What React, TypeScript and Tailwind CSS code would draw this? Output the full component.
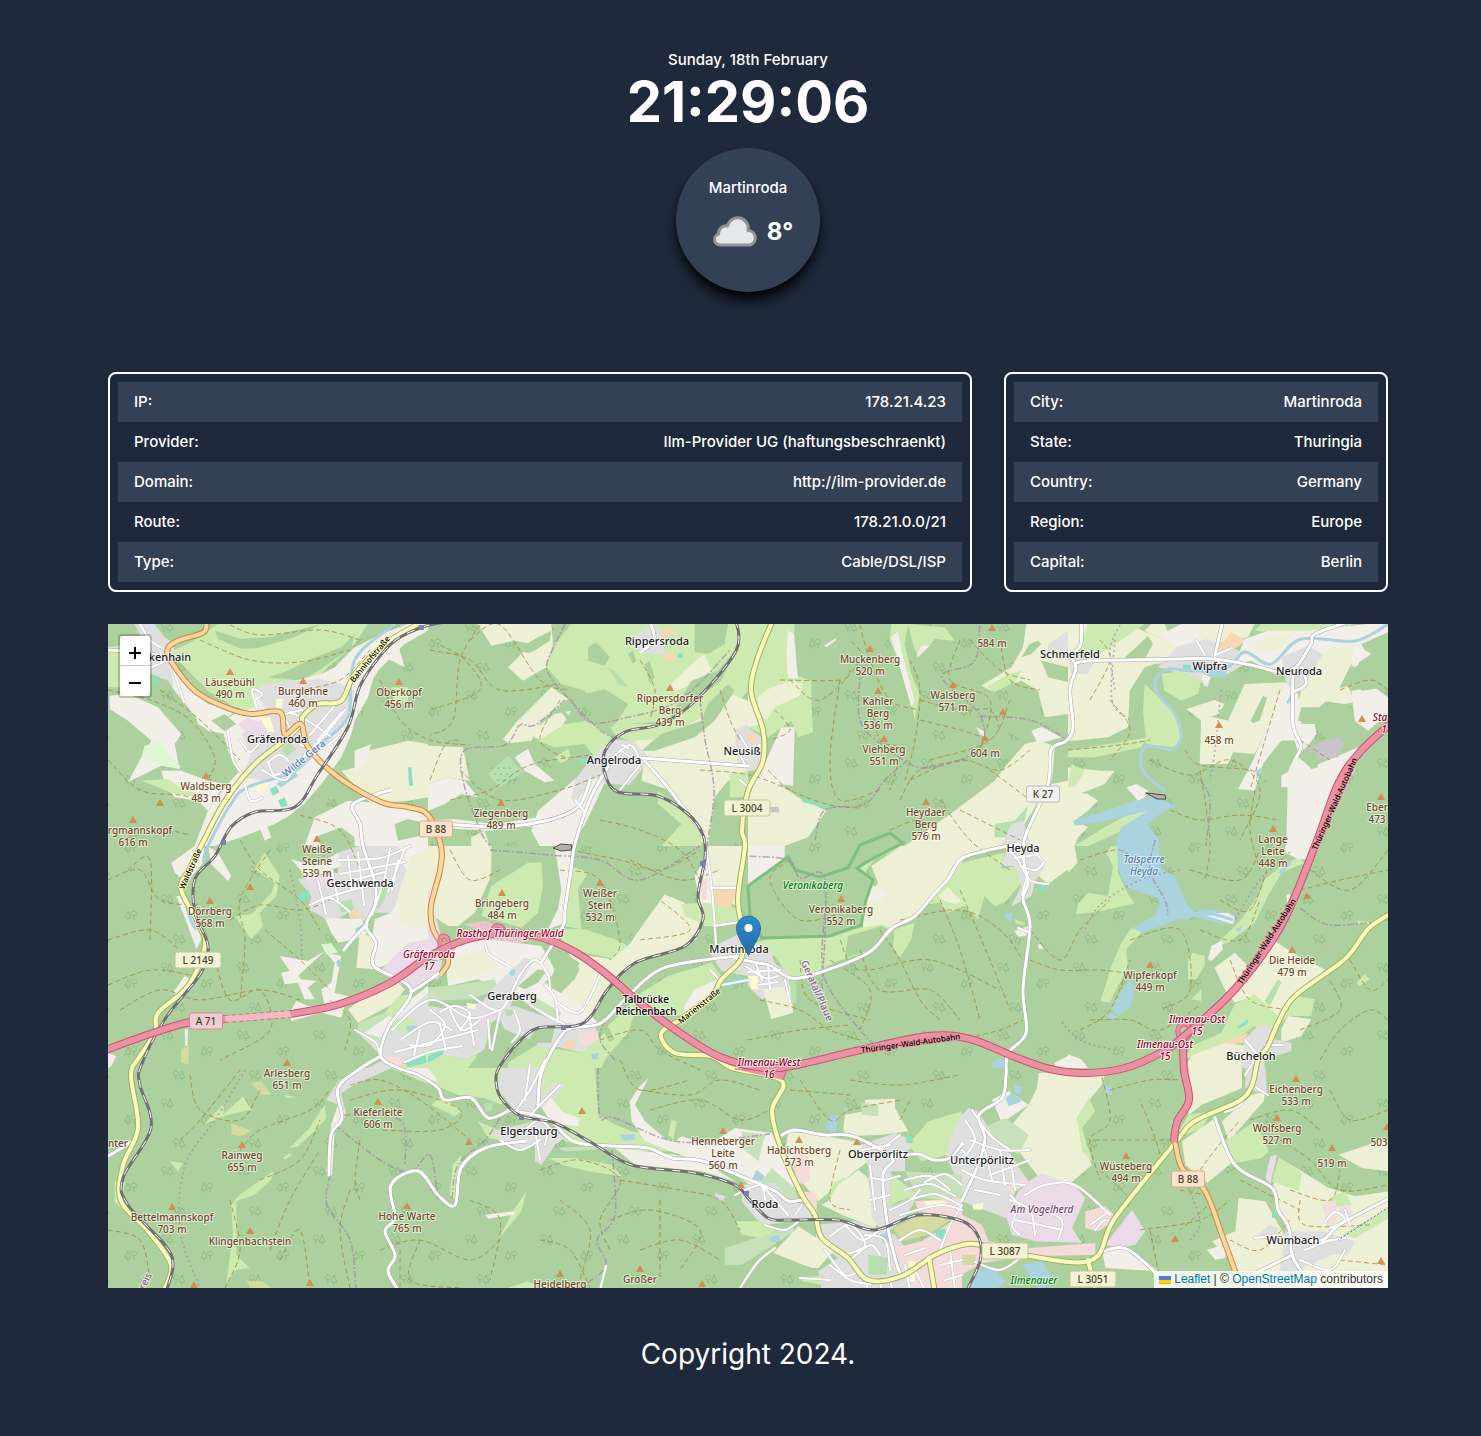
import React from "react";

const C = {
  D: "#add19e",
  F: "#eef0d5",
  G: "#cdebb0",
  L: "#f2efe9",
  R: "#e0dfdf",
  I: "#ebdbe8",
  W: "#aad3df",
  P: "#f5dcda",
  O: "#f8d8b4",
  T: "#8be0c2",
  M: "#def6d0",
  Q: "#c6c4c6",
  K: "#b7dfb0",
  V: "#c7e2bb",
  Y: "#fdfbd0",
  S: "#ebc4c9",
  U: "#d5daa0",
};

type Area = [keyof typeof C, string];
type Sheet = { x: number; y: number; areas: Area[] };

/* Land cover, three units per map pixel inside each sheet. */
const sheets: Sheet[] = [
  {
    x: 108,
    y: 624,
    areas: [
      ["G", "0,70 60,60 60,190 0,190"],
      ["G", "190,80 240,60 330,0 780,0 740,60 660,130 600,190 560,170 470,180 440,240 380,250 300,200 220,120"],
      ["R", "80,0 140,0 170,40 200,60 190,130 240,240 205,210 180,170 130,150 60,150 60,60 100,40"],
      ["D", "320,20 400,45 480,40 640,0 600,20 560,40 450,72 400,75 330,45"],
      ["D", "480,160 540,140 620,100 700,70 740,30 730,70 640,135 580,170"],
      ["L", "740,70 820,30 900,0 960,0 960,20 890,60 850,100 800,150 780,220 740,290 730,330 700,400 640,480 570,560 500,600 400,640 320,666 260,666 300,560 350,490 395,440 360,380 340,300 400,250 440,210 470,180 560,170 640,150 680,130"],
      ["L", "790,120 870,60 890,130 830,100 800,160"],
      ["R", "440,200 470,180 560,170 640,165 700,180 740,200 720,280 650,370 560,440 470,470 400,460 430,390 400,330 480,270"],
      ["G", "378,245 378,190 430,200 440,250 410,260"],
      ["I", "390,300 420,280 470,305 500,310 470,345 420,335"],
      ["L", "190,130 250,190 300,240 380,260 340,300 350,330 300,320 255,270 195,190"],
      ["L", "5,215 60,210 150,250 185,290 220,330 200,360 215,435 160,425 60,475 100,400 130,350 60,290 5,255"],
      ["L", "255,250 300,280 330,310 310,325 270,300"],
      ["D", "310,290 350,270 385,300 350,322"],
      ["M", "110,365 150,355 220,430 170,425 100,400"],
      ["L", "160,440 220,440 300,470 350,480 300,560 270,530 200,520 170,480"],
      ["G", "100,470 180,465 230,500 300,510 280,520 200,510"],
      ["F", "745,430 780,380 900,350 960,360 960,520 900,530 790,540 700,440"],
      ["T", "900,430 910,430 915,485 903,485"],
      ["L", "620,580 720,530 850,540 960,560 960,666 590,666"],
      ["D", "860,600 900,585 960,600 960,630 870,650"],
      ["D", "620,640 700,610 740,640 740,666 640,666"],
      ["L", "740,380 790,360 770,420 740,450"],
      ["D", "480,640 560,560 650,500 660,530 560,640 500,666"],
      ["W", "505,480 560,440 570,455 520,490"],
      ["Y", "445,480 480,475 470,500 450,505"],
      ["Y", "505,225 525,225 520,260 503,258"],
      ["Y", "455,280 485,280 500,325 480,325"],
      ["K", "515,380 545,355 565,375 540,395"],
      ["T", "485,495 505,485 515,505 495,515"],
      ["T", "510,530 530,520 540,545 520,550"],
      ["T", "130,160 150,155 150,175 135,180"],
      ["L", "440,570 460,560 490,640 470,650"],
      ["G", "850,190 900,190 900,230 860,250"],
    ],
  },
  {
    x: 428,
    y: 624,
    areas: [
      ["F", "150,0 370,0 375,60 355,130 285,170 240,130 310,60 260,50 190,65"],
      ["D", "270,75 330,40 370,20 365,50 320,80 300,88"],
      ["G", "430,0 960,0 960,200 870,300 700,370 620,360 560,330 470,200 400,180 355,130 380,60"],
      ["D", "480,70 505,55 545,100 530,125 480,110"],
      ["D", "470,210 530,195 600,240 570,290 540,320 470,250"],
      ["D", "800,0 900,0 890,60 840,90 800,85"],
      ["F", "730,180 790,120 830,90 850,140 790,180 740,205"],
      ["D", "790,170 870,140 920,80 930,60 880,170 800,230 700,300 600,300 720,290"],
      ["F", "620,350 700,345 840,270 880,200 960,230 960,460 900,470 860,520 840,666 800,640 780,600 730,500 640,470 650,400"],
      ["D", "640,380 700,330 820,290 840,240 900,180 920,200 860,290 800,340 680,380"],
      ["F", "225,345 265,295 370,190 420,225 390,250 340,290 310,350 240,358"],
      ["F", "300,330 380,270 430,260 400,310 340,350"],
      ["G", "330,350 410,300 480,290 550,340 520,400 460,390 380,370"],
      ["D", "380,370 470,360 500,400 440,430 370,430 340,380 250,360 110,375 150,500"],
      ["G", "380,400 420,375 430,400 400,418"],
      ["L", "260,400 300,375 320,420 380,470 350,475 290,440"],
      ["F", "0,365 105,370 125,470 60,460 0,480"],
      ["L", "0,480 60,460 110,470 150,520 100,510 50,540 0,560"],
      ["K", "180,450 240,395 285,445 215,490"],
      ["L", "310,620 330,560 400,500 470,440 545,440 510,520 440,666 335,666"],
      ["L", "0,590 80,585 200,600 330,580 330,605 180,620 0,610"],
      ["F", "130,640 170,620 185,666 130,666"],
      ["R", "500,390 560,345 620,355 660,400 640,440 580,510 500,460 440,540 430,520 440,470"],
      ["R", "600,40 680,0 700,30 710,90 640,90"],
      ["O", "705,90 740,90 740,110 710,115"],
      ["O", "695,20 730,10 740,30 705,40"],
      ["T", "750,90 765,88 765,102 750,102"],
      ["T", "455,405 472,400 475,418 455,418"],
      ["D", "550,480 700,490 770,560 780,600 740,666 430,666 510,540"],
      ["G", "690,500 780,570 820,620 820,666 700,666 760,600 690,540"],
      ["G", "905,450 960,440 960,520 905,520"],
      ["R", "920,320 960,300 960,440 930,430"],
      ["D", "395,250 430,280 420,290 400,265"],
      ["D", "600,90 615,80 625,110 615,120"],
      ["D", "650,120 665,110 680,160 665,180"],
      ["K", "540,130 570,150 600,190 570,180"],
    ],
  },
  {
    x: 748,
    y: 624,
    areas: [
      ["G", "0,0 140,0 130,150 190,170 190,230 195,325 150,340 130,290 60,340 0,310"],
      ["D", "60,0 75,0 50,60 40,60"],
      ["L", "120,20 138,30 150,165 120,160 115,90"],
      ["F", "30,220 60,195 130,170 165,180 155,215 80,250 55,290 30,260"],
      ["L", "45,430 100,310 140,310 135,485 90,480 70,600 60,666 0,666 0,500"],
      ["F", "0,210 25,220 40,300 0,310"],
      ["F", "0,470 95,480 150,520 235,560 180,640 110,666 0,666 0,580"],
      ["G", "430,0 480,0 470,60 490,150 515,210 500,290 480,170 450,100 425,50"],
      ["G", "480,0 590,10 620,50 560,45 540,70 510,100 495,60"],
      ["L", "505,100 520,65 545,65 520,90"],
      ["L", "430,40 450,20 460,80 500,230 490,250 450,110"],
      ["L", "228,65 265,42 262,50 235,70"],
      ["F", "835,0 960,0 960,270 890,280 870,200 820,170 730,200 700,185 790,130 825,70"],
      ["G", "715,190 780,150 820,140 800,175 740,203"],
      ["D", "845,60 870,50 880,60 850,90 820,100"],
      ["D", "880,110 960,130 960,175 900,160"],
      ["D", "790,170 870,210 880,280 860,320 830,360 760,300"],
      ["L", "850,320 880,308 940,340 870,360"],
      ["F", "620,560 740,470 770,430 830,360 870,350 930,370 910,470 830,600 810,666 470,666"],
      ["F", "910,480 960,470 960,666 820,666"],
      ["D", "920,370 960,350 960,430 915,440"],
      ["K", "740,600 800,590 840,545 830,590 790,640 740,640"],
      ["R", "790,600 825,590 850,666 760,666"],
      ["L", "685,310 715,325 715,340 695,330"],
      ["T", "155,520 240,545 300,545 240,552 165,535"],
      ["R", "0,310 40,340 50,400 20,440 0,440"],
      ["O", "0,330 30,330 25,355 0,350"],
      ["R", "900,60 960,20 960,110 900,90"],
      ["Q", "65,550 90,548 95,565 70,565"],
    ],
  },
  {
    x: 1068,
    y: 624,
    areas: [
      ["F", "0,0 150,0 200,10 340,70 360,110 260,120 200,180 180,310 120,340 20,350 0,350"],
      ["G", "60,0 230,0 130,70 50,110 20,110"],
      ["D", "215,60 240,35 255,60 230,105 165,105"],
      ["F", "250,0 560,0 540,40 440,60 330,70 230,20"],
      ["D", "290,0 350,0 330,20 300,25"],
      ["L", "280,30 340,0 400,0 390,50 330,75"],
      ["R", "330,65 420,45 540,90 530,120 480,150 430,150 420,190 380,160 270,130"],
      ["R", "0,100 80,110 60,150 10,150"],
      ["O", "450,70 490,25 535,50 490,80 460,85"],
      ["G", "740,0 860,0 740,40 560,20 580,0"],
      ["L", "530,45 600,20 720,20 900,0 960,0 960,25 880,60 900,100 860,130 800,70 720,150 620,150 550,110 500,120"],
      ["F", "560,60 600,35 680,30 620,80 570,80"],
      ["R", "640,100 720,65 780,100 710,200 660,210 650,150"],
      ["F", "775,75 880,60 810,200 720,280 680,270 700,200 740,130"],
      ["F", "790,200 840,185 860,235 830,240 760,230"],
      ["G", "230,180 270,215 320,270 340,340 320,370 235,360 225,260"],
      ["G", "280,150 340,140 400,170 390,210 340,230 290,200"],
      ["D", "185,200 230,130 260,120 220,200 220,300 180,310"],
      ["L", "400,150 430,160 410,190"],
      ["F", "355,255 440,228 470,240 450,270 400,290"],
      ["F", "400,270 480,290 530,180 650,175 620,270 560,390 495,385 480,420 395,420"],
      ["D", "548,290 585,215 597,222 575,290 555,298"],
      ["L", "650,175 690,210 700,300 740,300 745,330 720,365 690,390 690,400 730,430 870,370 860,440 780,560 740,666 655,666 660,440 685,390 680,350 640,350 600,400 585,420 560,500 510,495 550,420 620,260"],
      ["D", "640,350 680,350 690,385 670,400 650,500 600,520 590,430"],
      ["L", "640,455 665,440 665,490 640,490"],
      ["Q", "715,370 810,335 830,360 810,400 740,410"],
      ["D", "690,390 740,380 750,430 730,435"],
      ["D", "700,250 840,250 900,290 960,260 860,320 780,350 740,300 690,290"],
      ["L", "850,200 920,190 960,220 960,270 900,320 860,290"],
      ["D", "870,100 960,70 960,190 880,200"],
      ["F", "0,430 100,440 140,440 110,480 60,500 0,520"],
      ["F", "0,500 60,510 90,530 60,560 20,590 60,610 30,640 20,666 0,666"],
      ["G", "0,380 180,350 240,340 220,370 80,400 0,400"],
      ["G", "10,420 50,440 20,490 0,490"],
      ["G", "110,610 200,560 250,550 200,600 120,640 60,666 20,666"],
      ["W", "15,590 100,565 200,530 235,520 290,530 330,548 300,556 275,570 240,600 280,666 140,666 160,610 240,560 120,590 20,605"],
      ["L", "175,490 205,480 240,500 230,520 210,530"],
      ["Q", "230,503 290,508 296,522 270,524 235,515"],
      ["T", "345,122 368,122 368,138 345,138"],
      ["W", "400,145 480,135 470,160 430,160"],
      ["W", "565,440 580,430 575,460 565,465"],
      ["W", "655,235 670,210 672,225 660,240"],
      ["L", "860,60 910,90 850,130"],
    ],
  },
  {
    x: 108,
    y: 846,
    areas: [
      ["L", "190,50 260,0 290,0 285,50 235,110 200,80"],
      ["L", "300,0 330,20 370,90 360,105 310,55"],
      ["L", "205,150 235,150 280,280 265,310 240,240"],
      ["L", "230,390 250,400 210,450 195,440"],
      ["G", "440,70 470,20 515,90 505,150 455,200 465,240 430,280 380,210 430,205 490,140 500,110"],
      ["R", "570,100 690,80 690,20 750,0 930,0 900,90 850,200 800,200 760,230 720,200 670,230 640,210 600,190 610,150"],
      ["I", "590,95 690,80 690,130 620,130"],
      ["L", "550,40 620,60 690,20 700,60 600,100"],
      ["L", "650,215 760,220 780,260 740,280 690,290 670,260"],
      ["K", "690,170 730,160 740,190 700,200"],
      ["O", "720,200 750,190 760,210 730,222"],
      ["K", "820,120 840,110 830,160 805,200"],
      ["L", "870,0 960,0 960,280 890,310 850,350 800,370 790,300 800,220 850,200 900,90"],
      ["F", "910,30 960,10 960,250 880,240 870,150"],
      ["F", "755,260 790,270 800,370 745,365"],
      ["I", "815,375 900,290 960,280 960,400 920,435 850,400"],
      ["F", "790,440 860,400 890,430 860,470 750,530 720,490"],
      ["L", "515,330 600,345 650,315 570,390 580,400 625,405 600,425 620,460 590,460 570,410 530,415 520,380 545,375"],
      ["M", "640,295 670,292 690,320 655,325"],
      ["L", "655,320 700,330 680,440 720,450 700,490 650,480 640,430 670,410 680,350"],
      ["L", "545,500 565,465 600,480 710,480 700,515 640,500 550,525"],
      ["V", "750,530 860,490 840,560 800,590 750,560"],
      ["L", "770,560 870,490 960,420 960,500 880,580 830,580"],
      ["R", "745,555 800,590 870,520 960,440 960,620 860,666 780,666 830,640"],
      ["G", "860,666 960,620 960,666"],
      ["G", "845,550 870,500 910,470 910,445 870,450 830,500 860,520 930,520 900,560"],
      ["W", "895,540 930,538 930,555 900,558"],
      ["T", "565,150 600,130 607,152 580,170"],
      ["T", "890,645 952,628 956,650 898,664"],
      ["P", "830,630 890,640 880,655 840,666"],
      ["D", "700,310 740,300 740,330 700,335"],
      ["W", "740,250 770,232 765,245 745,258"],
      ["L", "0,620 25,630 10,660 0,666"],
      ["U", "220,610 242,600 242,655 220,650"],
      ["L", "230,550 240,550 238,600 232,600"],
      ["W", "685,345 697,340 697,365 687,360"],
    ],
  },
  {
    x: 428,
    y: 846,
    areas: [
      ["F", "0,0 200,0 185,100 140,200 90,240 60,240 0,200"],
      ["F", "200,0 215,0 190,90"],
      ["G", "160,210 190,120 300,50 350,50 350,120 330,200 280,245 230,230"],
      ["D", "340,40 395,50 400,130 370,220 340,250 330,200 345,120"],
      ["D", "190,0 380,0 360,30 290,45 190,100"],
      ["L", "380,0 430,0 412,230 360,250 390,190 400,130"],
      ["G", "430,60 480,80 450,130 460,250 410,240"],
      ["G", "400,250 470,250 560,280 600,300 560,340 430,310 390,270"],
      ["F", "600,300 710,145 770,170 780,210 820,220 805,280 770,300 620,345 560,400 540,430 480,520 440,520 380,460 440,400 455,370 420,320 550,340"],
      ["D", "700,110 800,115 800,165 720,150"],
      ["F", "835,0 950,0 940,110 925,180 840,130"],
      ["L", "800,90 835,30 850,130 860,240 830,240"],
      ["O", "850,130 925,130 910,185 870,200 855,160"],
      ["G", "760,175 830,170 925,185 930,230 840,240 770,210"],
      ["P", "820,100 837,100 837,160 820,160"],
      ["S", "110,235 170,225 260,260 300,285 240,300 190,290 180,265"],
      ["I", "0,130 50,310 30,400 0,400"],
      ["L", "50,300 180,280 340,300 380,370 360,420 450,470 520,540 380,530 250,440 150,400 60,420"],
      ["F", "60,340 160,310 210,360 130,395 60,400"],
      ["D", "370,300 455,350 440,390 400,400 395,425 350,410 380,380"],
      ["D", "270,420 330,370 355,375 330,410 290,430"],
      ["V", "0,425 100,415 200,400 210,430 130,460 0,465"],
      ["R", "0,480 60,490 160,470 220,400 290,335 320,345 270,420 240,500 190,530 170,610 120,640 0,620"],
      ["G", "0,620 120,640 150,625 120,666 0,666"],
      ["R", "200,490 260,480 400,530 500,540 520,590 460,620 380,600 350,666 300,666 330,590 230,550"],
      ["P", "450,560 510,555 510,600 460,600"],
      ["O", "410,585 445,585 440,605 410,605"],
      ["D", "290,600 330,540 380,545 370,590 320,590"],
      ["V", "300,440 400,500 390,520 310,485"],
      ["G", "540,540 640,440 720,390 850,350 880,390 830,430 760,510 700,500 620,500 600,560 530,640 510,600 560,580"],
      ["L", "800,430 870,400 850,450 760,530 770,480"],
      ["G", "240,650 320,600 460,620 530,560 550,600 520,666 240,666"],
      ["R", "840,310 960,250 960,390 880,375"],
      ["T", "890,405 940,390 945,410 895,425"],
      ["W", "245,375 262,370 260,385 247,390"],
      ["W", "490,625 512,620 508,640 492,640"],
      ["Y", "115,470 145,475 140,490 120,485"],
      ["T", "0,630 45,610 45,625 0,650"],
      ["K", "230,490 260,490 250,510 235,510"],
      ["I", "150,500 200,500 200,520 160,530"],
    ],
  },
  {
    x: 748,
    y: 846,
    areas: [
      ["L", "0,0 110,0 110,30 70,80 0,125"],
      ["G", "320,40 380,20 400,0 470,0 380,40 350,80 320,70"],
      ["F", "370,60 460,0 770,0 650,35 600,110 540,170 490,210 420,250 345,245 350,170 390,110"],
      ["L", "370,115 415,140 395,170 360,160"],
      ["G", "20,290 60,280 240,265 400,235 440,250 380,310 270,345 200,380 125,395 80,330 20,320"],
      ["D", "300,270 400,240 430,255 360,315 290,335"],
      ["G", "435,300 440,250 500,230 490,280 455,335"],
      ["G", "540,175 640,50 770,20 760,70 800,60 830,100 770,170 740,180 710,150 690,220 650,180 600,200 575,170"],
      ["F", "570,150 600,125 640,165 620,175 590,165"],
      ["F", "850,0 960,0 960,70 900,115 850,70"],
      ["R", "760,60 780,0 850,0 890,60 860,110 850,150 790,180 820,120 800,60"],
      ["L", "800,255 840,240 835,270 810,272"],
      ["R", "0,290 60,300 80,350 120,380 130,440 100,430 40,460 0,420"],
      ["F", "45,430 130,420 135,500 70,520"],
      ["Y", "0,390 30,390 30,430 10,430"],
      ["G", "800,220 830,230 830,238 805,232"],
      ["T", "870,125 890,115 895,130 875,138"],
      ["W", "770,205 795,200 790,225 778,222"],
      ["W", "733,650 760,635 775,666 730,666"],
      ["W", "210,440 235,430 230,445"],
      ["L", "870,295 880,295 885,310 873,308"],
      ["L", "920,650 960,630 960,666 920,666"],
      ["K", "125,395 145,395 145,470 130,470"],
    ],
  },
  {
    x: 1068,
    y: 846,
    areas: [
      ["G", "30,175 60,140 120,150 135,60 115,20 130,0 150,0 150,80 180,145 200,172 100,195 25,205"],
      ["F", "0,0 20,0 28,50 0,80"],
      ["W", "145,0 270,0 280,70 320,90 355,175 385,205 330,220 280,240 215,262 195,245 265,205 275,160 240,145 180,125 155,85"],
      ["W", "375,200 410,188 500,205 500,235 470,235 380,212"],
      ["L", "400,205 480,200 500,215 495,235 450,220"],
      ["G", "160,290 190,245 220,260 175,310 180,370 150,420 125,470 98,465 130,360"],
      ["W", "130,485 185,400 200,420 190,480 150,510"],
      ["W", "115,510 130,500 155,520 118,520"],
      ["G", "590,100 640,60 690,35 710,50 640,80 600,150 560,230 480,290 440,300 520,220 570,150"],
      ["L", "420,340 430,300 460,285 465,310 430,345"],
      ["W", "505,250 520,240 518,255 508,258"],
      ["F", "440,365 500,320 550,370 620,285 690,330 770,370 740,410 690,450 640,520 590,490 560,450 500,470 470,430"],
      ["G", "500,475 560,445 600,480 640,520 680,450 740,460 730,510 660,510 600,570 560,540 480,600 350,640 370,600 460,560"],
      ["K", "590,465 630,400 640,410 605,480"],
      ["F", "660,510 730,520 700,570 640,590 640,550"],
      ["F", "350,666 370,630 470,590 540,600 550,666"],
      ["R", "530,580 570,540 600,535 620,580 670,590 670,615 590,640 590,666 520,666"],
      ["G", "360,340 375,320 410,330 410,360 385,400 360,400"],
      ["G", "370,460 400,430 400,465"],
      ["L", "0,625 40,640 60,666 0,666"],
      ["O", "460,590 540,560 530,590 490,595"],
      ["L", "650,0 740,0 730,40 690,40 655,20"],
      ["W", "630,80 670,40 668,55 640,85"],
      ["G", "865,410 890,385 905,400 875,420"],
      ["T", "505,545 540,520 540,530 515,548"],
      ["L", "655,145 665,145 668,165 658,170"],
      ["G", "870,225 920,228 920,235 870,235"],
    ],
  },
  {
    x: 108,
    y: 1068,
    areas: [
      ["R", "690,40 760,0 850,0 740,50 700,75 715,140 680,190 670,320 655,310 668,180 690,110 655,95"],
      ["L", "690,110 710,130 680,190 672,320 656,310 670,170"],
      ["G", "545,240 600,185 650,110 655,150 620,190 570,235"],
      ["G", "525,270 545,255 550,262 530,275"],
      ["G", "395,380 495,310 490,335 440,380 385,400 385,560 425,600 385,605 355,645 375,500 370,410"],
      ["G", "288,168 350,105 345,140 405,85 430,125 360,140"],
      ["G", "185,280 225,285 210,310"],
      ["G", "20,340 50,340 40,420 20,400"],
      ["G", "850,0 1200,0 1180,110 1130,90 1050,80 1000,60 940,40"],
      ["L", "890,0 960,0 990,40 930,30"],
      ["R", "1180,0 1281,0 1281,150 1220,130 1170,60"],
      ["G", "970,110 1000,85 1060,130 1040,145"],
      ["G", "1110,160 1180,190 1200,220 1140,210"],
      ["R", "1150,190 1281,160 1281,230 1240,250 1180,220"],
      ["K", "1130,105 1155,105 1150,130 1130,130"],
      ["G", "1025,380 1035,290 1060,260 1060,290 1042,340 1045,400"],
      ["G", "1255,370 1240,430 1170,515 1215,430"],
      ["L", "1130,440 1220,430 1220,440 1140,452"],
      ["U", "430,45 460,40 490,80 460,80"],
      ["U", "370,165 430,190 400,205 370,200"],
      ["G", "530,80 570,88 535,90"],
      ["U", "415,640 460,640 500,666 430,666"],
      ["G", "1200,660 1260,640 1281,650 1281,666"],
    ],
  },
  {
    x: 535,
    y: 1068,
    areas: [
      ["G", "0,0 180,0 190,140 240,170 290,190 430,220 430,250 240,250 90,220 60,130 0,90"],
      ["R", "0,0 30,0 20,80 60,40 90,50 60,90 20,120 0,110"],
      ["L", "20,120 50,90 80,130 130,150 130,175 50,165"],
      ["R", "0,140 90,210 60,230 20,290 0,280"],
      ["V", "70,240 230,230 240,245 90,250"],
      ["D", "80,255 220,240 340,255 460,270 500,300 400,300 290,290 230,260"],
      ["G", "40,270 120,270 230,290 260,325 160,310 80,290"],
      ["L", "285,100 310,60 340,30 300,110 330,160 400,220 420,220 440,205 520,230 600,180 710,195 740,260 780,360 720,400 600,320 460,270 330,220 290,160"],
      ["L", "240,240 420,260 520,290 600,340 500,310 300,290"],
      ["V", "620,190 690,200 670,280 620,240"],
      ["V", "710,300 780,360 790,400 720,390 680,340"],
      ["R", "620,350 720,345 760,400 820,410 830,450 700,470 720,480 670,460 620,400"],
      ["F", "760,190 870,205 960,220 1010,240 1000,280 960,310 910,350 850,400 790,330 750,250"],
      ["P", "770,240 820,260 825,340 785,350"],
      ["P", "800,370 845,375 845,490 830,440"],
      ["F", "925,180 930,140 990,130 990,95 1080,92 1080,120 1120,190 1040,200 930,205"],
      ["V", "980,105 1030,110 1030,145 980,140"],
      ["G", "890,350 930,325 910,400 880,400"],
      ["F", "910,350 970,305 1000,330 1010,420 1040,440 1020,480 920,440 860,410 880,400"],
      ["R", "980,230 1080,195 1160,230 1110,250 1110,310 1070,310 1060,420 1150,380 1110,450 1050,500 1010,450 1000,300"],
      ["G", "1070,320 1150,380 1090,400 1060,420"],
      ["G", "1120,230 1180,160 1281,130 1281,220 1240,260 1160,280"],
      ["R", "1281,140 1262,170 1245,220 1235,270 1260,320 1281,330"],
      ["V", "1110,310 1281,320 1281,400 1150,390"],
      ["U", "1075,480 1180,430 1240,460 1180,500 1100,520"],
      ["P", "1140,400 1281,390 1281,450 1150,430"],
      ["R", "850,470 960,460 1080,500 1130,560 1140,666 860,666 850,610 910,570 840,520"],
      ["K", "1000,560 1060,570 1055,620 1000,620"],
      ["P", "1080,540 1160,520 1281,440 1281,666 1130,666"],
      ["V", "600,530 690,500 770,475 780,490 700,540 620,590 570,590 570,540"],
      ["G", "600,460 690,460 720,490 680,510 620,500"],
      ["F", "715,555 790,475 900,545 850,600 830,600"],
      ["G", "800,630 870,620 860,650 800,640"],
      ["R", "540,375 570,385 565,400 540,390"],
      ["W", "650,335 665,305 690,325 680,340"],
      ["W", "870,180 890,140 912,140 900,195"],
      ["W", "255,200 300,198 300,215 265,218"],
      ["W", "700,510 730,500 735,520 710,525"],
      ["W", "1035,500 1060,490 1070,525 1045,525"],
      ["W", "920,115 940,120 930,130"],
      ["T", "1110,205 1130,205 1135,225 1115,225"],
      ["T", "1200,490 1230,480 1235,510 1205,515"],
      ["Y", "1170,400 1230,400 1230,418 1175,418"],
      ["Y", "1120,580 1140,580 1140,640 1125,640"],
      ["G", "400,200 410,155 425,160 415,215"],
    ],
  },
  {
    x: 962,
    y: 1068,
    areas: [
      ["F", "230,15 430,15 420,50 370,110 345,150 360,230 390,290 320,350 240,340 170,250 150,170 200,110 225,60"],
      ["G", "345,150 380,90 400,130 360,180 390,280 360,250"],
      ["L", "90,95 140,70 200,110 120,165"],
      ["V", "60,180 130,150 200,200 170,260 90,220"],
      ["R", "0,140 20,120 50,130 90,200 130,240 200,340 160,370 130,450 0,400"],
      ["P", "130,360 190,335 200,345 150,375"],
      ["I", "130,440 170,370 200,340 240,315 340,355 370,390 330,480 360,525 220,520 150,500"],
      ["P", "370,430 430,415 465,450 410,490 370,480"],
      ["I", "430,530 510,425 550,490 520,530 470,540"],
      ["F", "680,0 840,0 840,60 720,110 680,140 675,100"],
      ["G", "650,190 680,140 750,130 720,180 670,200"],
      ["F", "660,220 760,150 815,280 735,345 670,290"],
      ["F", "780,160 870,80 910,70 905,100 800,220"],
      ["G", "790,220 880,160 920,250 900,270 820,285"],
      ["I", "925,265 945,260 925,350 910,330"],
      ["D", "740,350 830,300 925,360 930,400 900,410 830,390"],
      ["F", "950,270 1020,310 1100,360 1180,385 1281,370 1281,666 1020,666 980,500 930,370"],
      ["G", "950,270 1020,315 1010,370 930,340"],
      ["G", "1100,390 1150,370 1170,410 1110,420"],
      ["F", "1130,260 1250,220 1281,225 1281,310 1200,300"],
      ["F", "830,390 910,400 950,470 990,540 960,610 830,610 800,570 750,520 820,490"],
      ["L", "735,545 790,530 790,570 760,575"],
      ["R", "850,0 910,0 915,80 850,60"],
      ["R", "880,510 920,470 950,480 940,520"],
      ["R", "970,490 1080,490 1180,520 1160,560 1110,560 1000,610 960,560"],
      ["R", "960,580 1000,560 1020,610 950,610"],
      ["P", "1080,410 1120,395 1125,450 1100,490"],
      ["I", "1130,420 1165,410 1170,440 1140,450"],
      ["G", "1140,500 1281,420 1281,450 1180,510"],
      ["L", "420,545 500,540 590,610 430,600"],
      ["P", "0,440 60,470 80,520 200,540 400,525 400,560 200,565 60,585 0,620"],
      ["D", "200,575 380,570 390,600 350,666 180,666"],
      ["W", "30,630 50,605 90,595 130,640 100,666 30,666"],
      ["W", "180,590 240,580 280,640 230,666"],
      ["W", "130,90 150,75 180,100 140,115"],
      ["W", "425,55 450,55 450,80 430,75"],
      ["W", "155,50 180,55 175,80 158,75"],
      ["T", "930,430 945,435 945,450 930,450"],
      ["U", "0,560 40,560 40,590 0,590"],
      ["Y", "30,410 65,405 60,425 35,425"],
      ["L", "630,160 640,160 640,210 628,200"],
    ],
  },
];

/* Turns a list of points into a smooth curve. */
function curve(points: string): string {
  const p = points.split(" ").map((s) => s.split(",").map(Number));
  let d = `M${p[0][0]} ${p[0][1]}`;
  for (let i = 0; i < p.length - 1; i++) {
    const a = p[i - 1] || p[i];
    const b = p[i];
    const c = p[i + 1];
    const e = p[i + 2] || c;
    d += `C${b[0] + (c[0] - a[0]) / 6} ${b[1] + (c[1] - a[1]) / 6} ${c[0] - (e[0] - b[0]) / 6} ${c[1] - (e[1] - b[1]) / 6} ${c[0]} ${c[1]}`;
  }
  return d;
}

const rivers = [
  "395,624 361,651 351,674 348,717 321,744 295,771 248,787 231,804 208,846 203,862",
  "1388,624 1355,641 1301,639 1271,664 1245,652 1228,667 1195,671 1168,669 1155,681 1158,694 1175,714 1181,737 1171,749 1145,747 1143,771 1165,791",
  "185,900 190,918 196,930",
  "1181,918 1210,914 1233,920",
];

const motorways = [
  "100,1052 150,1034 190,1022 225,1019",
  "291,1014 340,1004 390,983 428,957 465,940 505,933 540,937 575,952 605,973 640,1003 680,1033 720,1057 765,1068 801,1064 860,1050 928,1036 970,1039 1015,1057 1050,1069 1085,1073 1125,1068 1160,1053 1183,1037 1235,989 1281,926 1315,846 1338,784 1360,752 1390,724",
  "1183,1037 1184,1070 1189,1100 1177,1122 1174,1142",
];

const primaries = [
  "206,620 204,632 180,640 168,648 171,661 195,691 225,707 251,714 280,712 285,734 301,724 308,747 338,777 381,802 408,807 428,815 441,846 440,870 431,906 433,929 445,949 448,963 441,974",
  "1175,1141 1182,1168 1205,1191 1222,1235 1235,1271 1243,1292",
];

const secondaries = [
  "418,624 385,644 355,674 341,701 318,704 303,716 301,724 285,740 255,764 225,801 201,846 190,868 181,889 198,923 205,946 188,986 158,1013 155,1033 138,1059 131,1076 138,1128 123,1165 121,1201 148,1231 171,1265 163,1292",
  "773,620 758,657 751,691 763,730 763,761 748,791 742,830 745,846 738,899 743,933 741,959 721,980 712,996 681,1019 661,1034 675,1053 711,1056 732,1068 782,1081 772,1111 782,1151 802,1195 815,1215 822,1238 848,1258 868,1280 902,1276 935,1255 962,1245 982,1245 1029,1256 1092,1260 1115,1218 1175,1143 1195,1121 1239,1101 1252,1085 1258,1060 1268,1046 1278,1023 1295,996 1345,959 1368,929 1390,914",
  "1088,1260 1096,1292",
  "929,1258 935,1292",
];

const tertiaries = [
  "1081,620 1081,644 1072,656 1076,668 1070,690 1073,727 1066,741 1051,750 1048,784 1025,837 1024,862 1028,883 1023,899 1030,926 1023,989 1026,1033 1008,1053 1006,1075 1002,1098 979,1115 985,1138 978,1165 962,1200",
  "1223,620 1215,655",
  "1075,666 1088,661 1178,659 1215,659 1255,666 1281,672 1297,666 1311,644 1315,634 1348,622",
  "1293,674 1293,724 1301,745 1297,756",
  "1293,692 1306,684 1302,668",
  "735,958 758,963 771,966 791,978 818,973 868,953 891,929 915,916 935,893 948,879 961,859 985,851 1018,844",
  "741,956 711,959 661,969 628,996 601,1023 571,1028 561,1036 547,1060 540,1078 538,1105",
  "641,758 695,762 748,766",
  "608,767 591,797 575,844 571,870 565,910 563,926 541,963",
  "590,780 578,807 545,821 495,827 428,822",
  "645,761 665,784 688,814 704,834",
  "391,790 368,797 352,806 360,824 363,846 375,883 375,905 366,926 376,943 374,966 411,990 388,1028 381,1056 398,1068 418,1075 438,1088 445,1100 471,1098 488,1118 508,1111",
  "448,966 428,981 411,992",
  "381,1056 361,1068 338,1088 342,1118 331,1135 329,1175",
  "525,1141 485,1148 461,1168 455,1205 438,1195 418,1171 391,1185 395,1218 385,1231 395,1255 388,1271 398,1290",
  "508,1110 535,1115 552,1122 575,1142 615,1146 648,1148 672,1158 702,1161 752,1181 775,1191 788,1201 802,1200",
  "782,1135 795,1130 825,1135 852,1136 892,1158 883,1175 888,1228 898,1268 902,1276",
  "892,1156 918,1154 934,1160 950,1158 962,1144",
  "1215,1118 1235,1165 1272,1188 1278,1210 1289,1228 1292,1255 1304,1275",
  "1292,1255 1272,1265 1245,1278",
  "1289,1238 1322,1240 1339,1225 1390,1198",
  "1096,1256 1110,1249 1129,1250 1158,1275",
  "367,924 352,940 344,950",
  "651,624 654,640 641,652",
  "108,650 135,652 160,655",
  "108,1156 122,1148 134,1140",
];

const streets = [
  "140,624 150,640 165,650", "125,680 150,668 168,660", "172,665 180,690 184,702", "228,732 233,760 242,775 250,800 262,798",
  "262,770 285,780 300,760 322,738 345,710", "255,700 262,694 252,690 258,712", "282,712 290,728", "290,712 310,722 330,736", "300,745 322,748 340,735",
  "268,762 280,755 290,765 275,775 268,762", "310,735 335,705", "318,740 342,712", "285,714 306,709", "240,740 250,752 260,742",
  "338,860 380,858 410,846", "340,874 372,868 405,862", "325,898 352,890 395,880", "348,856 352,890", "358,852 364,905", "390,848 384,880 372,915", "398,860 392,890", "310,905 330,898 350,912", "405,848 388,892", "345,882 385,872", "318,880 326,914", "332,870 338,900",
  "355,1030 375,1042 380,1055", "392,1030 430,1000 470,1018 500,1010", "400,1040 430,1022 452,1030", "430,1010 445,1025 430,1045 410,1045", "450,1010 462,1030 480,1020", "470,995 500,1010 520,975 535,960 548,975 550,990", "485,943 490,955 512,968", "500,1012 492,1050", "514,1010 520,1030 512,1042", "530,1005 558,1022", "558,1022 555,998 545,985", "535,1008 548,1016 564,1024", "556,1002 580,1012 600,975", "395,1052 440,1040 478,1030", "488,1020 490,1048", "440,1012 455,1006 470,1014 460,1030",
  "405,1062 430,1052 462,1046", "420,1030 414,1055", "440,1025 446,1050", "470,1020 474,1045",
  "515,1112 530,1090 545,1060", "530,1115 545,1100 560,1085", "525,1130 540,1120 555,1135", "500,1140 520,1150 540,1140", "535,1130 540,1160", "530,1064 525,1100", "548,1130 545,1145",
  "1005,846 1018,860 1030,880 1048,884", "1015,858 1035,855", "1020,866 1036,870 1044,862", "1030,846 1040,858", "1028,872 1022,895", "1018,928 1028,932",
  "745,966 765,978 778,976", "755,962 762,980", "768,965 770,990", "785,980 790,1002", "748,972 780,970", "758,985 778,982", "722,985 748,980", "710,970 722,982",
  "710,888 736,888", "714,926 740,922", "706,846 712,890 716,945",
  "740,735 750,750 760,745", "735,745 745,765", "740,780 750,790 744,800", "1196,640 1205,655", "1215,655 1232,648", "1215,658 1222,665",
  "610,760 630,745 640,760", "620,750 632,758", "640,765 620,790", "575,800 585,812", "628,748 622,745",
  "965,1120 975,1140 962,1160", "972,1110 990,1135 1010,1150", "962,1170 985,1180 1025,1185", "970,1140 1000,1150 1030,1150", "975,1190 1000,1195", "985,1150 992,1180", "1000,1150 1005,1185", "962,1150 975,1165", "1010,1155 1015,1190", "1010,1195 1020,1205", "990,1175 1030,1160",
  "1010,1200 1030,1210 1035,1235", "1025,1195 1045,1185 1075,1185 1110,1215", "1015,1220 1040,1225 1062,1230", "1020,1205 1012,1225 1020,1235", "1040,1210 1062,1220 1058,1240", "1090,1225 1108,1212", "1095,1230 1105,1220 1112,1224",
  "870,1165 875,1210", "885,1180 900,1176", "870,1200 890,1195", "890,1210 910,1200 920,1190", "880,1150 900,1135", "862,1150 890,1145", "872,1178 884,1180",
  "905,1180 930,1176 950,1190", "905,1190 930,1184 955,1196", "910,1200 935,1194 960,1205", "900,1215 940,1205 962,1210", "925,1182 945,1174 962,1185",
  "830,1236 850,1225 865,1245 845,1255", "845,1225 862,1240 880,1230", "850,1260 870,1245 880,1255", "825,1250 845,1275 860,1270", "865,1235 885,1240 890,1270", "830,1265 850,1280 870,1284", "900,1240 920,1230 940,1240", "905,1255 925,1248", "910,1290 905,1265", "915,1270 925,1290", "940,1250 950,1225 962,1205", "940,1265 962,1260", "945,1280 962,1275", "950,1250 955,1290", "868,1284 865,1292", "880,1282 882,1292", "890,1280 893,1292", "975,1262 1000,1270 1020,1258",
  "735,1195 760,1185 765,1200", "762,1185 788,1215", "765,1225 785,1230 800,1220", "795,1215 802,1205", "830,1280 800,1278",
  "1245,1040 1258,1055", "1258,1060 1240,1055", "1265,1045 1282,1045", "1255,1060 1245,1075", "1252,1085 1268,1095", "1252,1082 1240,1105 1225,1112",
  "1325,1222 1335,1212 1345,1220 1330,1228", "1345,1210 1350,1225", "1322,1242 1345,1238", "1305,1250 1330,1240", "1280,1235 1255,1238", "1300,1260 1330,1270 1345,1250",
  "740,1288 758,1262 775,1248", "600,1290 606,1266",
];

const rails = [
  "445,622 420,628 391,644 361,684 348,727 318,774 295,807 255,812 231,827 215,856 195,879 195,913 208,946 201,973 165,1019 141,1066 140,1085 151,1128 123,1178 128,1205 165,1245 173,1265 166,1292",
  "736,620 736,651 695,701 661,724 625,732 605,751 605,774 618,792 658,796 688,814 703,835 705,858 698,896 703,919 685,946 635,963 608,989 591,1016 575,1026 538,1028 518,1043 500,1066 496,1080 501,1098 521,1116 555,1123 592,1143 632,1165 695,1173 735,1185 748,1198 768,1218 788,1220 838,1220 875,1230 918,1215 962,1221 979,1238 980,1261 967,1290",
];

const tracks = [
  "108,690 150,700 190,720 215,760 200,790", "160,690 200,720 240,760", "200,640 250,660 300,662 350,650", "230,625 260,635 320,630 360,640", "300,690 340,680 370,650",
  "108,760 140,790 180,795 200,800", "120,840 160,830 190,835", "300,815 340,830 360,870", "240,840 260,870 300,900 320,930", "270,850 240,900 245,940 240,1000",
  "380,680 400,720 430,740 470,745", "430,650 470,660 500,690 560,684", "440,645 465,660 480,690 430,710", "430,780 445,745 460,740", "480,625 460,660 453,720 430,735", "470,640 500,625 540,680 570,690",
  "460,770 500,800 560,790 600,775", "450,800 490,790 530,765 590,755", "600,820 640,830 680,850 700,880", "570,850 620,860 660,870 700,850", "560,700 540,740 570,760", "640,660 655,690 650,720", "720,690 730,720 740,740", "700,770 750,775 790,790",
  "780,680 840,680 850,670", "775,710 790,730 770,740", "768,770 790,790 830,805 860,808", "790,680 820,700 860,660 850,640", "840,680 830,760 840,800 880,790", "870,700 880,740 900,750 890,790", "910,660 920,690 915,740 905,780", "860,625 870,660 890,700 920,710",
  "920,700 960,710 990,710 1000,730", "960,640 950,680 990,700 980,750", "970,640 1000,670 1030,680", "910,780 960,760 1000,770 1030,750", "900,800 920,770 970,760", "930,760 990,740 1010,700", "920,720 960,730 990,740", "890,830 920,820 930,840", "940,800 970,840 1010,870",
  "1000,640 1010,680 1040,690", "960,810 1000,830 1020,840", "990,770 1030,800", "1090,700 1110,660 1100,640", "1110,700 1130,730 1110,760", "1068,750 1120,745 1150,740", "1185,750 1200,765 1250,770 1262,780",
  "1150,760 1190,775 1230,760 1260,790 1240,840", "1170,810 1200,820 1240,815 1280,820", "1200,770 1210,840 1205,880", "1255,790 1250,830 1260,870", "1280,690 1265,740 1250,790", "1340,690 1370,680 1388,690", "1300,740 1330,760",
  "108,880 140,870 160,900 200,905", "108,940 150,930 180,950", "120,1010 160,990 200,1000 260,990 300,1000", "230,920 260,905 300,910 330,900", "215,960 230,1000 260,990 270,1030 220,1060", "108,985 150,970 190,975", "265,930 300,960 330,990", "128,870 150,860 150,940",
  "450,850 470,880 500,870", "330,1000 350,1020 345,1050", "410,950 440,960 470,930", "560,870 600,880 620,940 610,960", "630,860 680,880 720,870", "640,940 690,930 660,900", "600,1040 640,1030 660,1050 700,1070", "620,1060 640,1090 690,1080",
  "790,860 770,880 800,920 850,910", "760,1000 800,1010 830,1030 860,1040", "880,930 900,960 920,1000 940,1020", "860,950 880,990 930,990 960,1020", "940,900 960,950 980,1020", "960,890 990,960 1010,1010", "830,960 870,990 860,1030", "900,920 960,910 1000,930 1023,960", "840,940 860,970 930,960 1000,990", "748,1040 800,1030 850,1025", "800,960 810,1000 870,1020", "1030,960 1060,970 1100,970 1140,975", "960,1040 1000,1030 1023,1020", "1030,930 1060,960 1080,930 1110,900", "1080,860 1120,850 1140,870", "1090,1020 1130,1020 1160,1030 1200,1005",
  "1190,870 1240,880 1260,850", "1200,930 1240,940 1260,900", "1130,940 1180,930 1190,990 1160,1010", "1220,900 1250,910 1270,860", "1300,890 1340,880 1388,870", "1310,870 1350,890 1388,850", "1320,1060 1340,1030 1370,1010 1388,1020", "1300,1030 1340,1010 1330,980", "1350,960 1370,990 1388,980", "1230,960 1250,1000 1290,1010", "1080,1030 1110,1010 1130,960",
  "190,1075 200,1110 240,1120 260,1090", "180,1140 200,1120 240,1070", "240,1150 260,1130 310,1110 330,1090", "260,1180 300,1160 320,1120", "230,1200 240,1250 225,1288", "270,1250 290,1200 320,1150", "350,1100 400,1090 460,1110 440,1130 380,1130", "350,1085 380,1080 420,1100 470,1140", "350,1190 340,1230 350,1288", "380,1250 420,1240 470,1260 500,1240", "400,1250 400,1288", "420,1240 410,1280 460,1288", "470,1200 500,1220 490,1280", "108,1230 140,1240 150,1280", "280,1260 300,1230 310,1288", "360,1140 355,1180 360,1200",
  "540,1170 580,1160 620,1180 600,1220 610,1250", "560,1200 590,1230 580,1280", "620,1180 680,1190 720,1200 740,1230", "610,1220 650,1210 700,1230 680,1270", "640,1250 680,1240 720,1260", "660,1200 660,1280", "540,1240 570,1250 590,1288", "640,1090 690,1095 720,1080 760,1090", "650,1110 700,1100 740,1120 770,1110", "800,1080 830,1120 850,1110 900,1100", "850,1080 900,1085 960,1075", "790,1090 850,1095", "900,1120 910,1100", "840,1150 830,1200 850,1210",
  "1100,1070 1110,1120 1090,1140 1100,1180", "1110,1090 1150,1080 1180,1080", "1095,1140 1170,1140", "1130,1170 1160,1160 1140,1100", "1100,1170 1130,1200 1120,1210", "1140,1230 1200,1220 1230,1200", "1150,1230 1160,1280", "1180,1190 1210,1200 1180,1230", "1200,1170 1215,1150 1240,1120", "1250,1120 1290,1110 1320,1130", "1280,1140 1310,1160 1340,1190 1388,1185", "1330,1090 1350,1120 1388,1110", "1290,1190 1330,1200 1340,1170", "1230,1240 1260,1250 1290,1220", "1300,1200 1305,1225 1370,1225", "1340,1260 1388,1265", "1240,1180 1300,1210",
];

const borders = [
  "565,624 555,645 547,670 570,700 600,730 615,738", "565,700 535,725 520,725 505,745 465,750 463,780 480,830 490,846", "700,700 705,740 714,790 707,846 705,870", "571,700 590,722 625,718 680,700 730,650",
  "822,990 825,880 800,878 788,860 748,856", "826,900 822,960 830,990 860,1030 875,1045", "980,625 974,662 942,677 980,715 978,750 925,768 890,750 860,720 862,660", "980,716 1030,720 1068,740", "908,760 885,780 865,804 825,810 815,840",
  "598,1068 600,1117 615,1118 680,1142 770,1134", "612,1150 615,1215 597,1240 606,1266 580,1288", "330,1175 327,1205 350,1240 356,1288", "335,1125 380,1160 410,1172 430,1155 438,1200", "344,1115 400,1120 405,1165", "500,1118 485,1140 458,1165 452,1200", "490,850 550,855 600,860 640,880 700,846", "605,1020 600,1040 615,1060", "1300,908 1330,925 1388,920", "1155,840 1150,870 1165,900 1168,915", "1200,780 1210,800 1206,846",
];

const paths = [
  "245,1070 215,1120 185,1165 180,1230 200,1288", "1115,640 1112,700 1130,720", "1120,625 1110,650 1115,690", "1221,690 1215,750 1210,780", "1290,852 1260,880 1235,920", "1180,870 1140,880 1100,905 1085,930", "440,870 430,900", "1115,1050 1080,1040 1060,1020", "1180,1170 1200,1220 1190,1240", "290,870 300,920 302,960",
];

type Peak = { x: number; y: number; lines?: string[]; tx?: number };
const peaks: Peak[] = [
  { x: 230, y: 672, lines: ["Läusebühl", "490 m"] },
  { x: 303, y: 681, lines: ["Burglehne", "460 m"] },
  { x: 399, y: 682, lines: ["Oberkopf", "456 m"] },
  { x: 206, y: 776, lines: ["Waldsberg", "483 m"] },
  { x: 160, y: 803 },
  { x: 133, y: 820, tx: 140, lines: ["rgmannskopf"] },
  { x: 317, y: 839, lines: ["Weiße", "Steine", "539 m"] },
  { x: 670, y: 688, lines: ["Rippersdorfer", "Berg", "439 m"] },
  { x: 501, y: 803, lines: ["Ziegenberg", "489 m"] },
  { x: 870, y: 649, lines: ["Muckenberg", "520 m"] },
  { x: 878, y: 691, lines: ["Kahler", "Berg", "536 m"] },
  { x: 884, y: 739, lines: ["Viehberg", "551 m"] },
  { x: 953, y: 685, lines: ["Walsberg", "571 m"] },
  { x: 992, y: 628, lines: ["584 m"] },
  { x: 985, y: 738, lines: ["604 m"] },
  { x: 1003, y: 712 },
  { x: 926, y: 802, lines: ["Heydaer", "Berg", "576 m"] },
  { x: 1219, y: 725, lines: ["458 m"] },
  { x: 1362, y: 719 },
  { x: 1381, y: 797, tx: 1377, lines: ["Eber", "473"] },
  { x: 1273, y: 829, lines: ["Lange", "Leite", "448 m"] },
  { x: 210, y: 901, lines: ["Dörrberg", "568 m"] },
  { x: 250, y: 887 },
  { x: 287, y: 1063, lines: ["Arlesberg", "651 m"] },
  { x: 502, y: 893, lines: ["Bringeberg", "484 m"] },
  { x: 600, y: 883, lines: ["Weißer", "Stein", "532 m"] },
  { x: 841, y: 899, lines: ["Veronikaberg", "552 m"] },
  { x: 1307, y: 896 },
  { x: 1292, y: 950, lines: ["Die Heide", "479 m"] },
  { x: 1150, y: 965, lines: ["Wipferkopf", "449 m"] },
  { x: 378, y: 1102, lines: ["Kieferleite", "606 m"] },
  { x: 242, y: 1145, lines: ["Rainweg", "655 m"] },
  { x: 172, y: 1207, lines: ["Bettelmannskopf", "703 m"] },
  { x: 250, y: 1231, lines: ["Klingenbachstein"] },
  { x: 407, y: 1206, lines: ["Hohe Warte", "765 m"] },
  { x: 469, y: 1142 },
  { x: 194, y: 1285 },
  { x: 310, y: 1283 },
  { x: 582, y: 1111 },
  { x: 723, y: 1131, lines: ["Henneberger", "Leite", "560 m"] },
  { x: 799, y: 1140, lines: ["Habichtsberg", "573 m"] },
  { x: 857, y: 1142 },
  { x: 741, y: 1185 },
  { x: 640, y: 1269, lines: ["Großer"] },
  { x: 560, y: 1274, lines: ["Heidelberg"] },
  { x: 702, y: 1284 },
  { x: 1296, y: 1079, lines: ["Eichenberg", "533 m"] },
  { x: 1277, y: 1118, lines: ["Wolfsberg", "527 m"] },
  { x: 1332, y: 1148, lines: ["519 m"] },
  { x: 1387, y: 1127, tx: 1379, lines: ["503"] },
  { x: 1126, y: 1156, lines: ["Wüsteberg", "494 m"] },
  { x: 1175, y: 1239 },
  { x: 1381, y: 1261 },
];

const towns: [number, number, string][] = [
  [170, 661, "kenhain"],
  [277, 743, "Gräfenroda"],
  [657, 645, "Rippersroda"],
  [614, 764, "Angelroda"],
  [742, 755, "Neusiß"],
  [1070, 658, "Schmerfeld"],
  [1210, 670, "Wipfra"],
  [1299, 675, "Neuroda"],
  [360, 887, "Geschwenda"],
  [1023, 852, "Heyda"],
  [512, 1000, "Geraberg"],
  [739, 953, "Martinroda"],
  [1251, 1060, "Bücheloh"],
  [529, 1135, "Elgersburg"],
  [765, 1208, "Roda"],
  [878, 1158, "Oberpörlitz"],
  [982, 1164, "Unterpörlitz"],
  [1293, 1244, "Wümbach"],
];

const junctions: [number, number, string][] = [
  [429, 958, "Gräfenroda"],
  [429, 970, "17"],
  [510, 937, "Rasthof Thüringer Wald"],
  [769, 1066, "Ilmenau-West"],
  [769, 1078, "16"],
  [1197, 1023, "Ilmenau-Ost"],
  [1197, 1035, "15"],
  [1165, 1048, "Ilmenau-Ost"],
  [1165, 1060, "15"],
  [1380, 721, "Sta"],
  [1384, 733, "1"],
];

const notes: [number, number, number, string, string][] = [
  [372, 661, -50, "Bahnhofstraße", "fill-black stroke-[#f7fabf] text-[8px]"],
  [193, 870, -66, "Waldstraße", "fill-black stroke-[#f7fabf] text-[8px]"],
  [701, 1008, -39, "Marienstraße", "fill-black stroke-[#f7fabf] text-[8px]"],
  [911, 1046, -8, "Thüringer-Wald-Autobahn", "fill-black stroke-[#e892a2] text-[8px]"],
  [1337, 805, -66, "Thüringer-Wald-Autobahn", "fill-black stroke-[#e892a2] text-[8px]"],
  [1269, 943, -57, "Thüringer-Wald-Autobahn", "fill-black stroke-[#e892a2] text-[8px]"],
  [306, 761, -39, "Wilde Gera", "fill-[#4d80b3] stroke-white/60 text-[10px]"],
  [814, 992, 66, "Geratal/Plaue", "fill-[#8d618b] stroke-white/60 text-[10px]"],
  [147, 1285, -62, "kreis", "fill-[#8d618b] stroke-white/60 text-[10px]"],
  [813, 889, 0, "Veronikaberg", "fill-[#008000] stroke-white/60 text-[10px] italic"],
  [1034, 1284, 0, "Ilmenauer", "fill-[#008000] stroke-white/60 text-[10px] italic"],
  [1144, 863, 0, "Talsperre", "fill-[#4d80b3] stroke-white/60 text-[10px] italic"],
  [1144, 875, 0, "Heyda", "fill-[#4d80b3] stroke-white/60 text-[10px] italic"],
  [1042, 1213, 0, "Am Vogelherd", "fill-[#734a6e] stroke-white/60 text-[10px] italic"],
  [646, 1003, 0, "Talbrücke", "fill-black stroke-white/60 text-[10px]"],
  [646, 1015, 0, "Reichenbach", "fill-black stroke-white/60 text-[10px]"],
  [118, 1147, 0, "nter", "fill-[#734a26] stroke-white/60 text-[10px]"],
  [133, 846, 0, "616 m", "fill-[#734a26] stroke-white/60 text-[10px]"],
];

const shields: [number, number, number, string, string][] = [
  [436, 829, 33, "B 88", "fill-[#f9e3cf] stroke-[#d9a982]"],
  [1188, 1179, 33, "B 88", "fill-[#f9e3cf] stroke-[#d9a982]"],
  [198, 960, 46, "L 2149", "fill-[#f1f2d6] stroke-[#c3c58c]"],
  [747, 808, 46, "L 3004", "fill-[#f1f2d6] stroke-[#c3c58c]"],
  [1005, 1251, 46, "L 3087", "fill-[#f1f2d6] stroke-[#c3c58c]"],
  [1093, 1279, 46, "L 3051", "fill-[#f1f2d6] stroke-[#c3c58c]"],
  [206, 1021, 33, "A 71", "fill-[#f0cdd5] stroke-[#d98a9b]"],
  [1043, 794, 33, "K 27", "fill-[#f0f0f0] stroke-[#bdbdbd]"],
];

const halts: [number, number][] = [[421, 627], [223, 842], [702, 863], [563, 1027], [521, 1117], [746, 1193]];

function Lines({ items, width, color, dash, opacity, cap }: { items: string[]; width: number; color: string; dash?: string; opacity?: number; cap?: "round" | "butt" }) {
  return (
    <g fill="none" stroke={color} strokeWidth={width} strokeDasharray={dash} opacity={opacity} strokeLinecap={cap || "butt"} strokeLinejoin="round">
      {items.map((p, i) => (
        <path key={i} d={curve(p)} />
      ))}
    </g>
  );
}

function MapDrawing() {
  return (
    <svg
      viewBox="108 624 1280 664"
      preserveAspectRatio="xMidYMid slice"
      className="block h-full w-full font-['Noto_Sans',sans-serif]"
      role="img"
      aria-label="Map of Martinroda"
    >
      <defs>
        <pattern id="trees" width="76" height="68" patternUnits="userSpaceOnUse">
          <g fill="none" stroke="#94bb87" strokeWidth="1">
            <path d="M12 20v-5M12 16a2.500 2.500 0 1 1 .1 0M18 21v-3M15 18l3-7 3 7z" />
            <path d="M52 37v-3M49 34l3-7 3 7zM58 36v-5M58 32a2.500 2.500 0 1 1 .1 0" />
            <path d="M24 60v-5M24 56a2.500 2.500 0 1 1 .1 0M30 61v-3M27 58l3-7 3 7z" />
          </g>
        </pattern>
        <linearGradient id="pin" x1="0" y1="0" x2="0" y2="1">
          <stop offset="0" stopColor="#2e8ccb" />
          <stop offset="1" stopColor="#2468a8" />
        </linearGradient>
      </defs>
      <rect x="108" y="624" width="1280" height="664" fill="#add19e" />
      <rect x="108" y="624" width="1280" height="664" fill="url(#trees)" />
      {sheets.map((s) => (
        <g key={`${s.x}-${s.y}`} transform={`translate(${s.x} ${s.y}) scale(0.33333)`}>
          {s.areas.map(([c, points], i) => (
            <polygon key={i} points={points} fill={C[c]} />
          ))}
        </g>
      ))}
      <path
        d="M748 886L788 857L795 870L820 877L848 868L860 845L890 833L903 843L870 860L857 868L873 880L866 900L861 925L830 936L800 937L762 938L750 915Z"
        fill="#add19e"
        stroke="#7fbf7f"
        strokeWidth="3"
      />
      <Lines items={tracks} width={1} color="#a9873a" dash="5 3" opacity={0.8} />
      <Lines items={borders} width={1.5} color="#a98bab" dash="7 2 2 2" opacity={0.75} />
      <Lines items={paths} width={1.5} color="#a58db0" dash="2 3" opacity={0.75} />
      <Lines items={rivers} width={3} color="#aad3df" />
      <Lines items={streets} width={3} color="#c4c2c2" cap="round" />
      <Lines items={tertiaries} width={4} color="#a9a9a9" />
      <Lines items={streets} width={2} color="#ffffff" cap="round" />
      <Lines items={tertiaries} width={3} color="#ffffff" cap="round" />
      <Lines items={secondaries} width={6} color="#a9b05a" />
      <Lines items={secondaries} width={4} color="#f7fabf" cap="round" />
      <Lines items={primaries} width={6} color="#c98a3c" />
      <Lines items={primaries} width={4} color="#fcd6a4" cap="round" />
      <Lines items={rails} width={3} color="#707070" />
      <Lines items={rails} width={1} color="#ffffff" dash="8 8" />
      <path d="M225 1019L291 1014" stroke="#dc6a8a" strokeWidth="8" strokeDasharray="4 3" />
      <path d="M225 1019L291 1014" stroke="#f3bac6" strokeWidth="6" />
      <g fill="none" stroke="#dc5a80" strokeWidth="5">
        <path d="M440 948v-8c0-6 9-5 8 2M493 930c0-6 10-6 11 2M1183 1040c-8-6-6-16 1-16s9 9 2 15" />
        <path d="M440 948v-8c0-6 9-5 8 2M493 930c0-6 10-6 11 2M1183 1040c-8-6-6-16 1-16s9 9 2 15" stroke="#e892a2" strokeWidth="3" />
      </g>
      <path d="M735 1069L787 1069L783 1080" fill="#e892a2" stroke="#dc5a80" />
      <Lines items={motorways} width={8} color="#d34c73" />
      <Lines items={motorways} width={6} color="#e892a2" />
      <path d="M553 848l8-4 11 1-1 5-10 1z M1146 793l19 2 1 4-9 0z" fill="#b8b0a4" stroke="#4d4d4d" strokeWidth="1" />
      <path d="M1389 1207L1338 1240" stroke="#5a5ae0" strokeWidth="1" strokeDasharray="2 2" />
      {halts.map(([x, y]) => (
        <rect key={x} x={x - 2} y={y - 2} width="5" height="5" fill="#7981b0" />
      ))}
      <g fill="#2f8f5b">
        {[492, 498, 504, 510].map((x) => [768, 774, 780].map((y) => <circle key={`${x}${y}`} cx={x + (y - 768) / 2} cy={y} r="0.6" />))}
      </g>
      {shields.map(([x, y, w, t, cls]) => (
        <g key={x}>
          <rect x={x - w / 2} y={y - 8} width={w} height="16" rx="2" className={cls} />
          <text x={x} y={y + 4} textAnchor="middle" className="fill-[#4a4420] text-[10px]">
            {t}
          </text>
        </g>
      ))}
      <g textAnchor="middle" strokeWidth="2" strokeLinejoin="round" className="[paint-order:stroke]">
        {peaks.map((p, i) => (
          <g key={i}>
            <path d={`M${p.x - 4} ${p.y + 3}h8l-4-7z`} fill="#d08f55" />
            {(p.lines || []).map((l, n) => (
              <text key={n} x={p.tx || p.x} y={p.y + (/^\d/.test(p.lines![0]) ? 19 : 14) + n * 12} className="fill-[#734a26] stroke-white/60 text-[10px]">
                {l}
              </text>
            ))}
          </g>
        ))}
        {notes.map(([x, y, r, t, cls], i) => (
          <text key={i} transform={`translate(${x} ${y}) rotate(${r})`} className={cls}>
            {t}
          </text>
        ))}
        {towns.map(([x, y, t]) => (
          <text key={t} x={x} y={y} className="fill-[#222222] stroke-white/60 text-[11px]">
            {t}
          </text>
        ))}
        {junctions.map(([x, y, t], i) => (
          <text key={i} x={x} y={y} className="fill-[#960028] stroke-white/80 text-[10px] italic">
            {t}
          </text>
        ))}
      </g>
      <path
        d="M748.500 955.500C745 947 736.500 937 736.500 928a12 12 0 0 1 24 0C760.500 937 752 947 748.500 955.500z"
        fill="url(#pin)"
        stroke="#2b6fa5"
        strokeWidth="1"
      />
      <circle cx="748.500" cy="928" r="4" fill="#ffffff" />
    </svg>
  );
}

function CloudIcon() {
  return (
    <svg viewBox="0 0 64 64" className="h-16 w-16" aria-label="Cloudy">
      <path
        d="M17 45a5.500 5.500 0 0 1-1.500-10.800a7.500 7.500 0 0 1 9-8.200a10.300 10.300 0 0 1 20.500 4.500a7.400 7.400 0 0 1 2 14.500z"
        fill="#e6e7e8"
        stroke="#939393"
        strokeWidth="3"
        strokeLinejoin="round"
      />
    </svg>
  );
}

function InfoTable({ rows, label }: { rows: [string, string][]; label: string }) {
  return (
    <div className="rounded-lg border-2 border-white p-2">
      <table className="w-full" aria-label={label}>
        <tbody>
          {rows.map(([k, v]) => (
            <tr key={k} className="odd:bg-[#334155]">
              <th scope="row" className="px-4 py-2 text-left font-medium">
                {k}:
              </th>
              <td className="px-4 py-2 text-right">{v}</td>
            </tr>
          ))}
        </tbody>
      </table>
    </div>
  );
}

export default function App() {
  return (
    <div className="min-h-screen bg-[#1e293b] pt-12 pr-[93px] pb-16 pl-[108px] font-['Inter',sans-serif] text-[15px] leading-6 font-medium text-white">
      <header className="flex flex-col items-center">
        <p>Sunday, 18th February</p>
        <h1 className="text-[56px] leading-[60px] font-bold">21:29:06</h1>
        <section className="mt-4 flex h-36 w-36 flex-col items-center rounded-full bg-[#334155] pt-7 shadow-lg shadow-black">
          <p>Martinroda</p>
          <div className="flex items-center">
            <CloudIcon />
            <span className="text-2xl font-bold">8°</span>
          </div>
        </section>
      </header>

      <main>
        <div className="mt-20 grid grid-cols-[9fr_4fr] gap-8">
          <InfoTable
            label="Connection"
            rows={[
              ["IP", "178.21.4.23"],
              ["Provider", "Ilm-Provider UG (haftungsbeschraenkt)"],
              ["Domain", "http://ilm-provider.de"],
              ["Route", "178.21.0.0/21"],
              ["Type", "Cable/DSL/ISP"],
            ]}
          />
          <InfoTable
            label="Location"
            rows={[
              ["City", "Martinroda"],
              ["State", "Thuringia"],
              ["Country", "Germany"],
              ["Region", "Europe"],
              ["Capital", "Berlin"],
            ]}
          />
        </div>

        <section className="relative mt-8 h-[664px] overflow-hidden">
          <MapDrawing />
          <div className="absolute top-[10px] left-[10px] flex flex-col rounded border-2 border-black/20 bg-white bg-clip-padding text-black">
            <button type="button" aria-label="Zoom in" className="flex h-[30px] w-[30px] items-center justify-center border-b border-[#cccccc] pt-1">
              <svg viewBox="0 0 12 12" className="h-3 w-3" stroke="currentColor" strokeWidth="2">
                <path d="M6 0v12M0 6h12" />
              </svg>
            </button>
            <button type="button" aria-label="Zoom out" className="flex h-[30px] w-[30px] items-center justify-center pt-1">
              <svg viewBox="0 0 12 12" className="h-3 w-3" stroke="currentColor" strokeWidth="2">
                <path d="M0 6h12" />
              </svg>
            </button>
          </div>
          <div className="absolute right-0 bottom-0 flex items-center bg-white/80 px-[5px] font-['Liberation_Sans',sans-serif] text-[12px] leading-[17px] font-normal text-[#333333]">
            <a href="https://leafletjs.com" className="flex items-center gap-[3px] text-[#0078a8]">
              <svg viewBox="0 0 12 8" className="h-2 w-3">
                <path fill="#4c7be1" d="M0 0h12v4H0z" />
                <path fill="#ffd500" d="M0 4h12v3H0z" />
                <path fill="#e0bc00" d="M0 7h12v1H0z" />
              </svg>
              Leaflet
            </a>
            <span className="whitespace-pre"> | © </span>
            <a href="https://www.openstreetmap.org/copyright" className="text-[#0078a8]">
              OpenStreetMap
            </a>
            <span className="whitespace-pre"> contributors</span>
          </div>
        </section>
      </main>

      <footer className="mt-12 text-center text-[28px] leading-9 font-normal">Copyright 2024.</footer>
    </div>
  );
}
